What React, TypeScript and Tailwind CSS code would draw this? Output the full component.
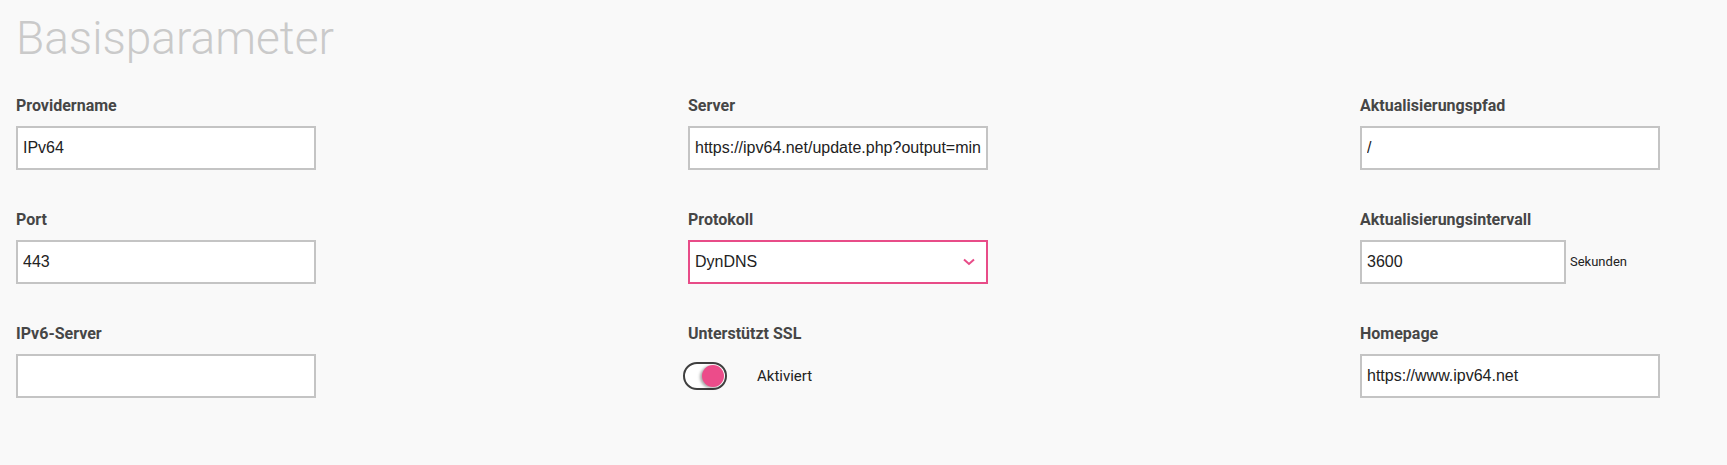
import React from "react";

const labelCls =
  "block h-[20px] leading-[20px] text-[16px] font-bold text-[#464646] mb-[10px] [font-family:Roboto,sans-serif]";
const inputCls =
  "block h-[44px] w-[300px] border-2 border-[#c4c4c4] bg-white px-[5px] text-[16px] text-[#222222] outline-none [font-family:'Liberation_Sans',Arial,sans-serif]";

function Field({ label, value }: { label: string; value: string }) {
  return (
    <div>
      <label className={labelCls}>{label}</label>
      <input className={inputCls} defaultValue={value} readOnly />
    </div>
  );
}

export default function App() {
  return (
    <div className="min-h-[465px] w-full bg-[#f9f9f9] pl-[16px] pt-[10px]">
      <h1 className="text-[46px] leading-[56px] font-light text-[#cacaca] [font-family:Roboto,sans-serif]">
        Basisparameter
      </h1>
      <div className="mt-[30px] grid grid-cols-[672px_672px_1fr] gap-y-[40px]">
        <Field label="Providername" value="IPv64" />
        <Field label="Server" value="https://ipv64.net/update.php?output=min" />
        <Field label="Aktualisierungspfad" value="/" />

        <Field label="Port" value="443" />
        <div>
          <label className={labelCls}>Protokoll</label>
          <div className="flex h-[44px] w-[300px] items-center justify-between border-2 border-[#e84c88] bg-white pl-[5px] pr-[11px]">
            <span className="text-[16px] text-[#222222] [font-family:'Liberation_Sans',Arial,sans-serif]">
              DynDNS
            </span>
            <svg width="12" height="8" viewBox="0 0 12 8" fill="none">
              <path d="M1 1.5 L6 6 L11 1.5" stroke="#e84c88" strokeWidth="2" />
            </svg>
          </div>
        </div>
        <div>
          <label className={labelCls}>Aktualisierungsintervall</label>
          <div className="flex items-center">
            <input
              className="block h-[44px] w-[206px] border-2 border-[#c4c4c4] bg-white px-[5px] text-[16px] text-[#222222] outline-none [font-family:'Liberation_Sans',Arial,sans-serif]"
              defaultValue="3600"
              readOnly
            />
            <span className="ml-[4px] text-[13px] text-[#222222] [font-family:Roboto,sans-serif]">
              Sekunden
            </span>
          </div>
        </div>

        <Field label="IPv6-Server" value="" />
        <div>
          <label className={labelCls}>Unterstützt SSL</label>
          <div className="flex h-[44px] items-center">
            <div className="-ml-[5px] flex h-[28px] w-[44px] items-center justify-end rounded-full border-2 border-[#3f3f3f] bg-white pr-[1px]">
              <div className="h-[22px] w-[22px] rounded-full bg-[#ec4c8a] shadow-[-2px_1px_3px_rgba(0,0,0,0.35)]" />
            </div>
            <span className="ml-[30px] text-[15px] text-[#222222] [font-family:Roboto,sans-serif]">
              Aktiviert
            </span>
          </div>
        </div>
        <Field label="Homepage" value="https://www.ipv64.net" />
      </div>
    </div>
  );
}
